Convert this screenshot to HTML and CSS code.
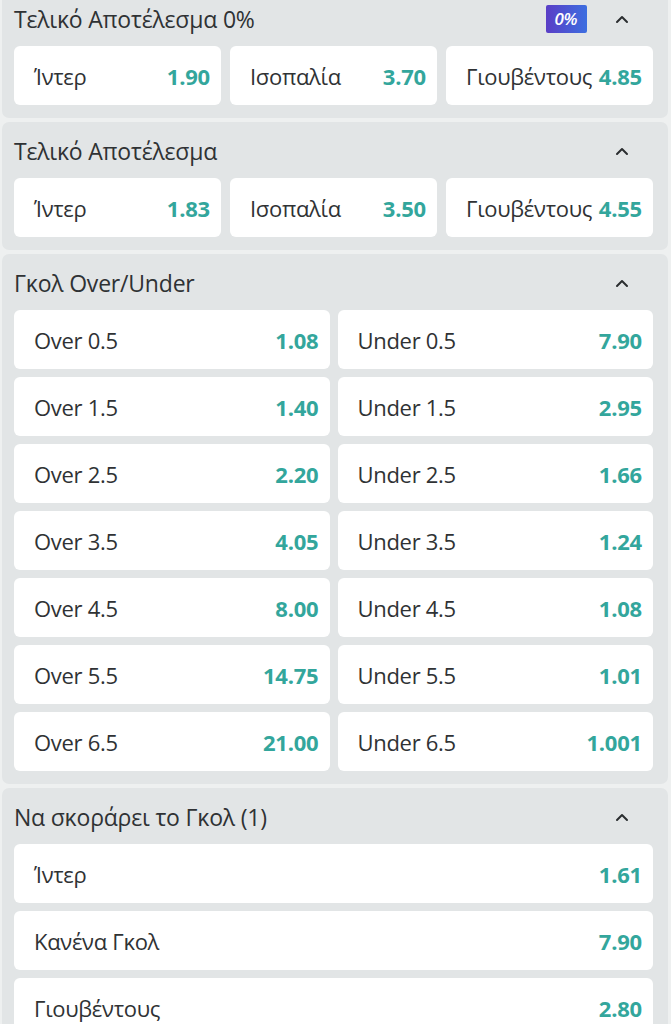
FILE: index.html
```html
<!DOCTYPE html>
<html lang="el">
<head>
  <meta charset="UTF-8" />
  <meta name="viewport" content="width=device-width, initial-scale=1.0" />
  <title>Αγορές</title>
  <link rel="stylesheet" href="styles.css">
</head>
<body>
  <div class="markets">

    <div class="market">
      <div class="market-head">
        <span class="market-title">Τελικό Αποτέλεσμα 0%</span>
        <span class="badge">0%</span>
        <svg class="chev" viewBox="0 0 24 12"><path d="M7 9 L12 4 L17 9" /></svg>
      </div>
      <div class="grid cols3">
        <div class="odd"><span class="label">Ίντερ</span><span class="price">1.90</span></div>
        <div class="odd"><span class="label">Ισοπαλία</span><span class="price">3.70</span></div>
        <div class="odd"><span class="label">Γιουβέντους</span><span class="price">4.85</span></div>
      </div>
    </div>

    <div class="market">
      <div class="market-head">
        <span class="market-title">Τελικό Αποτέλεσμα</span>
        <svg class="chev" viewBox="0 0 24 12"><path d="M7 9 L12 4 L17 9" /></svg>
      </div>
      <div class="grid cols3">
        <div class="odd"><span class="label">Ίντερ</span><span class="price">1.83</span></div>
        <div class="odd"><span class="label">Ισοπαλία</span><span class="price">3.50</span></div>
        <div class="odd"><span class="label">Γιουβέντους</span><span class="price">4.55</span></div>
      </div>
    </div>

    <div class="market">
      <div class="market-head">
        <span class="market-title">Γκολ Over/Under</span>
        <svg class="chev" viewBox="0 0 24 12"><path d="M7 9 L12 4 L17 9" /></svg>
      </div>
      <div class="grid cols2">
        <div class="odd"><span class="label">Over 0.5</span><span class="price">1.08</span></div>
        <div class="odd"><span class="label">Under 0.5</span><span class="price">7.90</span></div>
        <div class="odd"><span class="label">Over 1.5</span><span class="price">1.40</span></div>
        <div class="odd"><span class="label">Under 1.5</span><span class="price">2.95</span></div>
        <div class="odd"><span class="label">Over 2.5</span><span class="price">2.20</span></div>
        <div class="odd"><span class="label">Under 2.5</span><span class="price">1.66</span></div>
        <div class="odd"><span class="label">Over 3.5</span><span class="price">4.05</span></div>
        <div class="odd"><span class="label">Under 3.5</span><span class="price">1.24</span></div>
        <div class="odd"><span class="label">Over 4.5</span><span class="price">8.00</span></div>
        <div class="odd"><span class="label">Under 4.5</span><span class="price">1.08</span></div>
        <div class="odd"><span class="label">Over 5.5</span><span class="price">14.75</span></div>
        <div class="odd"><span class="label">Under 5.5</span><span class="price">1.01</span></div>
        <div class="odd"><span class="label">Over 6.5</span><span class="price">21.00</span></div>
        <div class="odd"><span class="label">Under 6.5</span><span class="price">1.001</span></div>
      </div>
    </div>

    <div class="market">
      <div class="market-head">
        <span class="market-title">Να σκοράρει το Γκολ (1)</span>
        <svg class="chev" viewBox="0 0 24 12"><path d="M7 9 L12 4 L17 9" /></svg>
      </div>
      <div class="grid cols1">
        <div class="odd"><span class="label">Ίντερ</span><span class="price">1.61</span></div>
        <div class="odd"><span class="label">Κανένα Γκολ</span><span class="price">7.90</span></div>
        <div class="odd"><span class="label">Γιουβέντους</span><span class="price">2.80</span></div>
      </div>
    </div>

  </div>
</body>
</html>
```

FILE: styles.css
```css
body {
  margin: 0;
  background: #eef0f0;
  font-family: "Open Sans", "Noto Sans", sans-serif;
  color: #2f3234;
  overflow: hidden;
}

.markets {
  margin-top: -10px;
  padding: 0 3px 0 2px;
  display: flex;
  flex-direction: column;
  gap: 4px;
}

.market {
  background: #e2e5e6;
  border-radius: 7px;
  padding: 0 15px 13px 12px;
}

.market-head {
  height: 56px;
  display: flex;
  align-items: center;
  padding-top: 2px;
  box-sizing: border-box;
}

.market-title {
  flex: 1;
  font-size: 23px;
  letter-spacing: -0.2px;
}

.badge {
  background: linear-gradient(90deg, #5a3ec6, #3d6ee0);
  color: #fff;
  font-size: 17px;
  font-weight: 600;
  font-style: italic;
  letter-spacing: -0.5px;
  padding: 2px 10px 3px 9px;
  border-radius: 2px;
  margin-right: 23px;
  line-height: 23px;
}

.chev {
  width: 24px;
  height: 12px;
  margin-right: 19px;
}

.chev path {
  fill: none;
  stroke: #2b2e30;
  stroke-width: 2;
  stroke-linecap: round;
  stroke-linejoin: round;
}

.grid {
  display: grid;
  gap: 8px;
}

.cols3 { grid-template-columns: 1fr 1fr 1fr; gap: 8px 9px; }
.cols2 { grid-template-columns: 1fr 1fr; }
.cols1 { grid-template-columns: 1fr; }

.odd {
  background: #fff;
  border-radius: 6px;
  height: 59px;
  display: flex;
  align-items: center;
  justify-content: space-between;
  gap: 4px;
  padding: 0 11px 0 20px;
}

.label {
  font-size: 22px;
  letter-spacing: -0.3px;
  white-space: nowrap;
}

.price {
  font-size: 22px;
  font-weight: 700;
  color: #33a69c;
  letter-spacing: -0.2px;
}
```
